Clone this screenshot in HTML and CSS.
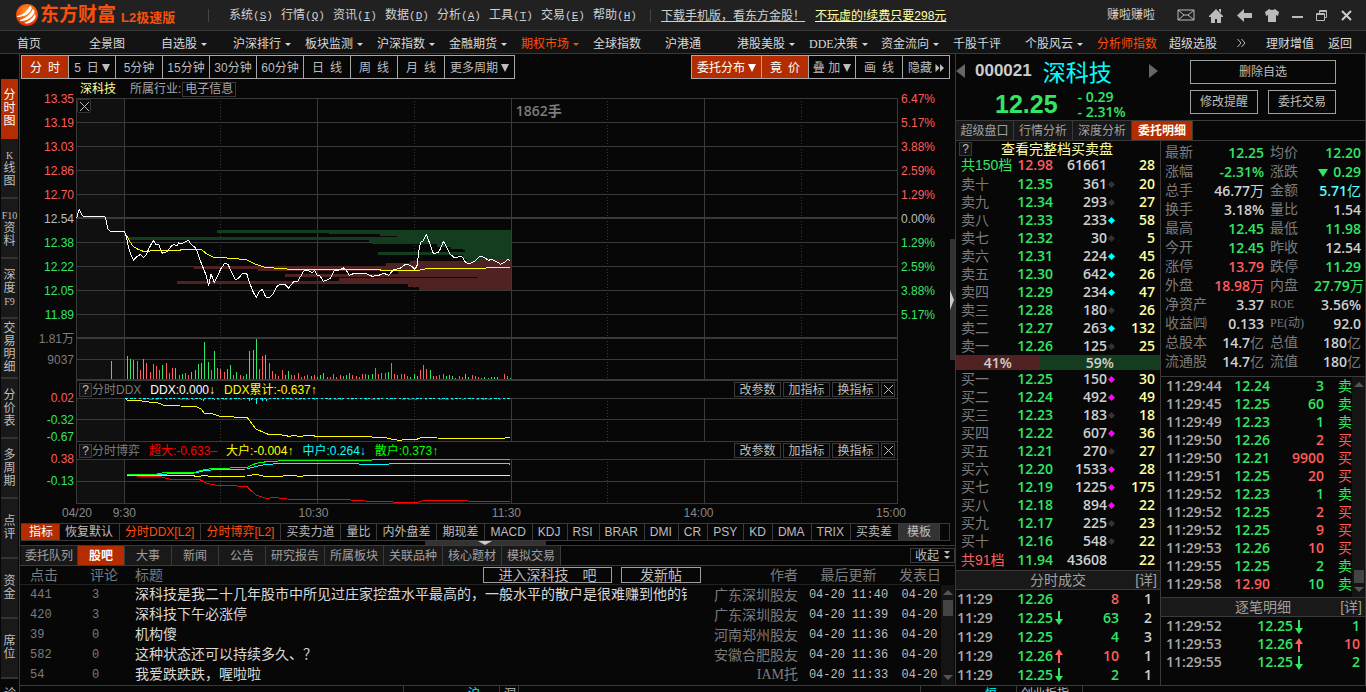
FILE: index.html
```html
<!DOCTYPE html>
<html lang="zh-CN">
<head>
<meta charset="utf-8">
<title>东方财富 L2极速版</title>
<link rel="stylesheet" href="styles.css">
</head>
<body>
<svg class="defs" aria-hidden="true">
  <symbol id="down" viewBox="0 0 8 14"><path d="M3 0h2v8h3L4 14 0 8h3z" fill="currentColor"/></symbol>
  <symbol id="up" viewBox="0 0 8 14"><path d="M3 14h2V6h3L4 0 0 6h3z" fill="currentColor"/></symbol>
  <symbol id="close" viewBox="0 0 9 9"><path d="M0 0l9 9M9 0L0 9" stroke="currentColor" fill="none"/></symbol>
</svg>

<header class="titlebar">
  <div class="brand">
    <svg class="logo" viewBox="0 0 22 22"><defs><radialGradient id="lg" cx=".5" cy=".35" r=".7"><stop offset="0" stop-color="#ffa030"/><stop offset=".6" stop-color="#f55a0a"/><stop offset="1" stop-color="#d81e00"/></radialGradient></defs><circle cx="11" cy="11" r="11" fill="url(#lg)"/><path d="M1 12C7 11 10 8 14 2c2 1 2 2 1 4C12 11 7 13 1 13zM4 16C10 14 14 11 17 5c2 2 2 4 0 6-4 5-8 6-13 6zM8 19c5-2 8-4 11-9 1 2 1 4-1 6-3 3-6 4-10 3z" fill="#fff"/></svg>
    <strong class="brand-name">东方财富</strong><strong class="brand-sub">L2极速版</strong>
  </div>
  <nav class="menu">
    <button>系统<span>(<u>S</u>)</span></button><button>行情<span>(<u>Q</u>)</span></button><button>资讯<span>(<u>I</u>)</span></button><button>数据<span>(<u>D</u>)</span></button><button>分析<span>(<u>A</u>)</span></button><button>工具<span>(<u>T</u>)</span></button><button>交易<span>(<u>E</u>)</span></button><button>帮助<span>(<u>H</u>)</span></button>
  </nav>
  <div class="promo"><a href="#">下载手机版，看东方金股！</a><a href="#" class="pale">不玩虚的!续费只要298元</a></div>
  <span class="user">赚啦赚啦</span>
  <div class="winicons">
    <button aria-label="邮件"><svg width="18" height="12" viewBox="0 0 18 12"><path d="M1 1h16v10H1zM1 1l6 5h4l6-5M1 11l6-5M17 11l-6-5" fill="none" stroke="#bbb"/></svg></button>
    <button aria-label="首页"><svg width="16" height="15" viewBox="0 0 16 15"><path d="M8 1l7 7v1h-2v6H9v-4H7v4H3V9H1V8zM11 1h2v4l-2-2z" fill="#bbb"/></svg></button>
    <button aria-label="后退"><svg width="15" height="13" viewBox="0 0 15 13"><path d="M0 6.500L7 0v4h8v5H7v4z" fill="#bbb"/></svg></button>
    <button aria-label="皮肤"><svg width="14" height="13" viewBox="0 0 14 13"><path d="M4 0q3 2 6 0l4 3-1 4-2-1v7H3V6L1 7 0 3z" fill="#bbb"/></svg></button>
    <button aria-label="最小化"><svg width="11" height="11" viewBox="0 0 11 11"><path d="M0 6h11v2H0z" fill="#bbb"/></svg></button>
    <button aria-label="还原"><svg width="12" height="11" viewBox="0 0 12 11"><path d="M.5 3.500h8v7h-8zM.5 4.500h8M3.500 3V.5h7v7H9M3 1.500h8" fill="none" stroke="#bbb"/></svg></button>
    <button aria-label="关闭"><svg width="11" height="11" viewBox="0 0 11 11"><path d="M1 1l9 9M10 1l-9 9" stroke="#ccc" stroke-width="2"/></svg></button>
  </div>
</header>

<nav class="mainnav">
  <a href="#">首页</a><a href="#">全景图</a><a href="#" class="dd">自选股</a><a href="#" class="dd">沪深排行</a><a href="#" class="dd">板块监测</a><a href="#" class="dd">沪深指数</a><a href="#" class="dd">金融期货</a><a href="#" class="dd hot">期权市场</a><a href="#">全球指数</a><a href="#">沪港通</a><a href="#" class="dd">港股美股</a><a href="#" class="dd"><span class="serif">DDE</span>决策</a><a href="#" class="dd">资金流向</a><a href="#">千股千评</a><a href="#" class="dd">个股风云</a><a href="#" class="hot">分析师指数</a><a href="#">超级选股</a>
  <button class="more" aria-label="更多"><svg width="9" height="8" viewBox="0 0 9 8"><path d="M.5 0l3.500 4-3.500 4M4.500 0L8 4 4.500 8" fill="none" stroke="#bbb"/></svg></button>
  <a href="#" class="short">理财增值</a><a href="#" class="short">返回</a>
</nav>

<div class="workspace">
  <aside class="sidebar">
    <button class="on">分<br>时<br>图</button><button><small>K</small><br>线<br>图</button><button><small>F10</small><br>资<br>料</button><button>深<br>度<br><small>F9</small></button><button>交<br>易<br>明<br>细</button><button>分<br>价<br>表</button><button>多<br>周<br>期</button><button>点<br>评</button><button>资<br>金</button><button>席<br>位</button>
  </aside>

  <main class="center">
    <div class="upper">
      <section class="chartcol">
        <div class="toolbar">
          <div class="btns"><button class="on">分&ensp;时</button><button>5&ensp;日<i class="tri"></i></button><button>5分钟</button><button>15分钟</button><button>30分钟</button><button>60分钟</button><button>日&ensp;线</button><button>周&ensp;线</button><button>月&ensp;线</button><button class="wide">更多周期<i class="tri"></i></button></div>
          <div class="btns"><button class="on wide">委托分布<i class="tri"></i></button><button class="on">竟&ensp;价</button><button>叠 加<i class="tri"></i></button><button>画&ensp;线</button><button>隐藏<svg class="ff" width="9" height="8" viewBox="0 0 9 8"><path d="M.5 0v8l4-4zM5 0v8l4-4z" fill="currentColor"/></svg></button></div>
        </div>

        <div class="chart">
          <div class="axis left">
            <span class="r">13.35</span><span class="r">13.19</span><span class="r">13.03</span><span class="r">12.86</span><span class="r">12.70</span><span>12.54</span><span class="g">12.38</span><span class="g">12.22</span><span class="g">12.05</span><span class="g">11.89</span><span class="dim">1.81万</span><span class="dim vol">9037</span>
            <span class="r sub first">0.02</span><span class="g sub">-0.32</span><span class="g last">-0.67</span><span class="r sub second">0.38</span><span class="g sub">-0.13</span>
          </div>
          <div class="plots">
            <div class="info"><span class="pale">深科技</span><span>所属行业:<a href="#">电子信息</a></span></div>
            <div class="price">
              <svg viewBox="0 0 2466 849" preserveAspectRatio="none" height="283">
                <path class="zone" d="M0 0H145V849H0z"/>
                <path class="grid" d="M0 1.500H2466M0 73.500H2466M0 145.500H2466M0 217.500H2466M0 289.500H2466M0 433.500H2466M0 505.500H2466M0 577.500H2466M0 649.500H2466M0 784.500H2466M1.500 0V849M145.500 0V849M724.500 0V849M1306.500 0V849M1885.500 0V849M2464.500 0V849"/>
                <path class="grid heavy" d="M0 361H2466M0 720H2466M0 846H2466"/>
                <path class="grid dots" d="M433.500 0V849M1015.500 0V849M1594.500 0V849M2176.500 0V849"/>
                <g transform="translate(672 306)">
                  <path class="bidzone" d="M-249 90H634V184H500V176H489V165H234V156H494V150H489V147H452V141H410V132H216V126H207V120H-520V111H291V108H240V102H88V99H-249z"/>
                  <path class="askzone" d="M634 178H540V184H330V189H258V198H-318V207H-126V213H294V222H-45V231H531V234H117V243H-369V252H324V261H357V270H634z"/>
                </g>
                <g transform="translate(-228 66)">
                  <path class="bar up" d="M412 777V724M421 777V750M439 777V729M451 777V756M460 777V732M469 777V738M478 777V750M499 777V729M508 777V759M517 777V744M538 777V765M556 777V759M565 777V765M634 777V750M652 777V744M661 777V747M673 777V756M700 777V765M721 777V765M730 777V768M778 777V747M787 777V708M808 777V729M817 777V753M826 777V762M835 777V768M847 777V750M874 777V765M883 777V765M895 777V759"/>
                  <path class="bar down" d="M334 777V723M382 777V708M391 777V717M400 777V720M430 777V717M487 777V735M526 777V744M547 777V763M574 777V756M586 777V750M595 777V733M604 777V729M613 777V666M625 777V726M643 777V693M682 777V747M691 777V735M709 777V756M739 777V762M748 777V693M760 777V690M769 777V657M796 777V705M856 777V765M865 777V753"/>
                  <polyline class="avg" points="374,336 380,348 388,362 400,380 414,388 430,394 446,394 456,391 540,391 545,388 604,388 618,400 640,411 682,414 740,419 766,432 795,442 860,447 900,448"/>
                  <polyline class="last" points="230,295 234,280 238,268 242,276 247,287 252,289 314,289 318,300 324,328 332,334 374,334 380,356 386,385 392,403 400,420 410,410 422,403 430,413 438,405 448,383 460,361 468,374 476,373 487,400 496,397 504,393 512,380 520,374 532,376 536,369 546,370 554,367 565,361 574,374 586,383 592,395 600,420 608,440 618,465 626,497 633,462 643,487 654,465 662,447 674,430 684,433 694,455 706,479 716,474 726,462 740,460 750,492 760,517 769,532 777,516 787,508 797,531 810,532 820,520 833,496 845,493 856,494 866,504 880,486 894,483 900,472"/>
                </g>
                <g transform="translate(672 306)">
                  <path class="bar up" d="M4 537V531M13 537V528M22 537V525M43 537V525M82 537V531M91 537V531M100 537V522M109 537V531M121 537V525M130 537V528M157 537V525M169 537V528M178 537V531M187 537V522M196 537V522M226 537V504M235 537V522M244 537V519M256 537V519M274 537V489M283 537V522M292 537V525M304 537V522M313 537V522M322 537V528M361 537V510M370 537V495M379 537V507M409 537V528M418 537V525M430 537V522M478 537V528M487 537V531M517 537V525M526 537V528M535 537V531M544 537V534M613 537V522M622 537V528"/>
                  <path class="bar down" d="M34 537V528M52 537V531M61 537V525M70 537V519M139 537V525M148 537V519M205 537V525M217 537V522M265 537V516M331 537V531M343 537V522M352 537V528M391 537V510M400 537V528M439 537V528M448 537V525M457 537V528M466 537V534M496 537V522M505 537V531M553 537V531M565 537V534M574 537V531M583 537V531M592 537V531M631 537V534"/>
                  <polyline class="avg" points="0,208 240,208 242,211 356,211 384,205 556,205 560,202 630,202"/>
                  <polyline class="last" points="0,232 12,212 22,211 36,218 44,212 52,226 60,228 70,244 90,236 102,212 114,212 130,204 138,210 148,226 160,221 195,220 217,229 236,226 252,220 266,226 280,210 300,205 318,192 334,198 345,208 352,195 356,155 362,126 370,122 379,104 388,127 400,160 414,158 422,145 430,124 440,142 450,162 462,172 486,170 496,186 506,192 526,182 538,170 550,171 565,181 576,178 590,185 602,193 614,187 624,178 630,182"/>
                </g>
              </svg>
              <button class="closebox" aria-label="关闭"><svg width="9" height="9"><use href="#close"/></svg></button>
              <span class="volhint">1862手</span>
            </div>
            <div class="panelhead">
              <button class="help">?</button><span class="name">分时DDX</span><span class="w">DDX:0.000↓</span><span class="y">DDX累计:-0.637↑</span>
              <div class="ops"><button>改参数</button><button>加指标</button><button>换指标</button><button class="x" aria-label="关闭"><svg width="9" height="9"><use href="#close"/></svg></button></div>
            </div>
            <svg viewBox="0 0 2466 132" preserveAspectRatio="none" height="44">
              <path class="zone" d="M0 0H145V132H0z"/>
              <path class="grid" d="M0 1.500H2466M0 64.500H2466M0 130.500H2466M1.500 0V132M145.500 0V132M724.500 0V132M1306.500 0V132M1885.500 0V132M2464.500 0V132"/>
              <path class="grid dots" d="M433.500 0V132M1015.500 0V132M1594.500 0V132M2176.500 0V132"/>
              <path class="line c ddx1" d="M150 1.500H1306"/><path class="line rd ddx2" d="M200 4.500H1306"/>
              <path class="line c" d="M376 3V7M383 3V10M415 3V7M519 3V10M526 3V7M540 3V18M558 3V10M570 3V8"/>
              <polyline class="avg" transform="translate(-228 -84)" points="374,84 382,90 425,93 455,97 475,99 492,106 540,108 588,109 605,118 612,129 635,131 660,139 742,143 768,177 790,187 805,193 840,194 868,199 880,197 900,199 930,196 950,199 1110,199 1120,202 1160,204 1180,209 1202,211 1215,208 1250,208 1262,203 1290,202 1310,204 1380,205 1515,205 1517,202 1530,202"/>
            </svg>
            <div class="panelhead">
              <button class="help">?</button><span class="name">分时博弈</span><span class="rd">超大:-0.633–</span><span class="y">大户:-0.004↑</span><span class="c">中户:0.264↓</span><span class="lg">散户:0.373↑</span>
              <div class="ops"><button>改参数</button><button>加指标</button><button>换指标</button><button class="x" aria-label="关闭"><svg width="9" height="9"><use href="#close"/></svg></button></div>
            </div>
            <svg viewBox="0 0 2466 135" preserveAspectRatio="none" height="45">
              <path class="zone" d="M0 0H145V135H0z"/>
              <path class="grid" d="M0 1.500H2466M0 67.500H2466M0 133.500H2466M1.500 0V135M145.500 0V135M724.500 0V135M1306.500 0V135M1885.500 0V135M2464.500 0V135"/>
              <path class="grid dots" d="M433.500 0V135M1015.500 0V135M1594.500 0V135M2176.500 0V135"/>
              <g transform="translate(-228 -267)">
                <polyline class="line rd" points="381,316 440,320 485,321 510,328 600,329 620,340 650,346 740,349 768,375 800,386 820,382 860,387 1040,389 1110,394 1180,396 1200,399 1250,398 1270,392 1530,394"/>
                <polyline class="line c" points="381,315 460,316 520,310 585,309 612,302 655,298 740,297 765,290 800,283 860,280 880,282 930,280 950,282 1000,281 1150,283 1200,280 1527,280 1530,284"/>
                <polyline class="line lg" points="381,314 460,314 492,308 585,307 612,299 640,295 740,293 768,280 800,275 870,271 1110,271 1120,269 1530,269"/>
                <polyline class="avg" points="381,316 440,317 580,317 590,320 610,317 640,319 740,318 768,313 790,318 850,318 870,316 900,319 930,316 1530,317"/>
              </g>
            </svg>
          </div>
          <div class="axis right">
            <span class="r">6.47%</span><span class="r">5.17%</span><span class="r">3.88%</span><span class="r">2.59%</span><span class="r">1.29%</span><span>0.00%</span><span class="g">1.29%</span><span class="g">2.59%</span><span class="g">3.88%</span><span class="g">5.17%</span>
          </div>
        </div>
        <div class="times"><span>04/20</span><span>9:30</span><span>10:30</span><span>11:30</span><span>14:00</span><span>15:00</span></div>
        <div class="indicators"><button class="on">指标</button><button>恢复默认</button><button class="hot">分时DDX[L2]</button><button class="hot">分时博弈[L2]</button><button>买卖力道</button><button>量比</button><button>内外盘差</button><button>期现差</button><button>MACD</button><button>KDJ</button><button>RSI</button><button>BRAR</button><button>DMI</button><button>CR</button><button>PSY</button><button>KD</button><button>DMA</button><button>TRIX</button><button>买卖差</button><button class="tpl">模板</button></div>
        <div class="hsplit"><i></i></div>
      </section>
      <div class="vsplit"><i></i></div>
    </div>

    <section class="news">
      <div class="newstabs"><button>委托队列</button><button class="on mid">股吧</button><button class="mid">大事</button><button class="mid">新闻</button><button class="mid">公告</button><button>研究报告</button><button>所属板块</button><button>关联品种</button><button>核心题材</button><button>模拟交易</button><button class="fold">收起<svg width="6" height="9" viewBox="0 0 6 9"><path d="M0 0h6L3 3zM0 5h6L3 8z" fill="currentColor"/></svg></button></div>
      <div class="newsbody">
        <table>
          <colgroup><col class="c1"><col class="c2"><col><col class="c4"><col class="c5"><col class="c6"></colgroup>
          <thead><tr><th>点击</th><th>评论</th><th><div class="th-title">标题<span><button class="go">进入深科技&emsp;吧</button><button>发新帖</button></span></div></th><th class="ra">作者</th><th class="ca">最后更新</th><th class="ca">发表日</th></tr></thead>
          <tbody>
            <tr><td class="m">441</td><td class="m">3</td><td><a href="#" class="t">深科技是我二十几年股市中所见过庄家控盘水平最高的，一般水平的散户是很难赚到他的钱</a></td><td class="ra">广东深圳股友</td><td class="d">04-20 11:40</td><td class="d">04-20</td></tr>
            <tr><td class="m">420</td><td class="m">3</td><td><a href="#" class="t">深科技下午必涨停</a></td><td class="ra">广东深圳股友</td><td class="d">04-20 11:39</td><td class="d">04-20</td></tr>
            <tr><td class="m">39</td><td class="m">0</td><td><a href="#" class="t">机构傻</a></td><td class="ra">河南郑州股友</td><td class="d">04-20 11:36</td><td class="d">04-20</td></tr>
            <tr><td class="m">582</td><td class="m">0</td><td><a href="#" class="t">这种状态还可以持续多久、？</a></td><td class="ra">安徽合肥股友</td><td class="d">04-20 11:36</td><td class="d">04-20</td></tr>
            <tr><td class="m">54</td><td class="m">0</td><td><a href="#" class="t">我爱跌跌跌，喔啦啦</a></td><td class="ra mix">IAM托</td><td class="d">04-20 11:33</td><td class="d">04-20</td></tr>
          </tbody>
        </table>
        <div class="scroll newsscroll"><i class="su"></i><i class="thumb"></i><i class="sd"></i></div>
      </div>
    </section>
  </main>

  <aside class="quote">
    <div class="qhead">
      <div class="qinfo">
        <div class="qname"><button class="prev" aria-label="上一只"></button><b>000021</b><strong>深科技</strong><button class="next" aria-label="下一只"></button></div>
        <div class="qprice"><b>12.25</b><span>- 0.29<br>- 2.31%</span></div>
      </div>
      <div class="qbtns"><button class="full">删除自选</button><button>修改提醒</button><button>委托交易</button></div>
    </div>
    <div class="qtabs"><button>超级盘口</button><button>行情分析</button><button>深度分析</button><button class="on">委托明细</button></div>
    <div class="qcols">
      <section class="book">
        <div class="booktitle"><button class="help">?</button><a href="#">查看完整档买卖盘</a></div>
        <table class="lv">
          <colgroup><col class="b1"><col class="b2"><col class="b3"><col class="b4"><col></colgroup>
          <tr><th class="g">共150档</th><td class="r">12.98</td><td>61661</td><td></td><td>28</td></tr>
          <tr><th>卖十</th><td>12.35</td><td>361</td><td><i></i></td><td>20</td></tr>
          <tr><th>卖九</th><td>12.34</td><td>293</td><td><i></i></td><td>27</td></tr>
          <tr><th>卖八</th><td>12.33</td><td>233</td><td><i class="cy"></i></td><td>58</td></tr>
          <tr><th>卖七</th><td>12.32</td><td>30</td><td><i></i></td><td>5</td></tr>
          <tr><th>卖六</th><td>12.31</td><td>224</td><td><i class="cy"></i></td><td>45</td></tr>
          <tr><th>卖五</th><td>12.30</td><td>642</td><td><i class="cy"></i></td><td>26</td></tr>
          <tr><th>卖四</th><td>12.29</td><td>234</td><td><i class="cy"></i></td><td>47</td></tr>
          <tr><th>卖三</th><td>12.28</td><td>180</td><td><i></i></td><td>26</td></tr>
          <tr><th>卖二</th><td>12.27</td><td>263</td><td><i class="cy"></i></td><td>132</td></tr>
          <tr><th>卖一</th><td>12.26</td><td>125</td><td><i></i></td><td>25</td></tr>
        </table>
        <div class="ratio"><span style="width:41%">41%</span><span style="width:59%">59%</span></div>
        <table class="lv buy">
          <colgroup><col class="b1"><col class="b2"><col class="b3"><col class="b4"><col></colgroup>
          <tr><th>买一</th><td>12.25</td><td>150</td><td><i class="mg"></i></td><td>30</td></tr>
          <tr><th>买二</th><td>12.24</td><td>492</td><td><i class="mg"></i></td><td>49</td></tr>
          <tr><th>买三</th><td>12.23</td><td>183</td><td><i></i></td><td>18</td></tr>
          <tr><th>买四</th><td>12.22</td><td>607</td><td><i class="mg"></i></td><td>36</td></tr>
          <tr><th>买五</th><td>12.21</td><td>270</td><td><i></i></td><td>27</td></tr>
          <tr><th>买六</th><td>12.20</td><td>1533</td><td><i class="mg"></i></td><td>28</td></tr>
          <tr><th>买七</th><td>12.19</td><td>1225</td><td><i class="mg"></i></td><td>175</td></tr>
          <tr><th>买八</th><td>12.18</td><td>894</td><td><i class="mg"></i></td><td>22</td></tr>
          <tr><th>买九</th><td>12.17</td><td>225</td><td><i></i></td><td>23</td></tr>
          <tr><th>买十</th><td>12.16</td><td>548</td><td><i></i></td><td>22</td></tr>
          <tr class="sum"><th class="r">共91档</th><td>11.94</td><td>43608</td><td></td><td>22</td></tr>
        </table>
        <div class="bar-title">分时成交<a href="#">[详]</a></div>
        <table class="deals">
          <colgroup><col class="d1"><col class="d2"><col class="d3"><col class="d4"><col></colgroup>
          <tr><td>11:29</td><td>12.26</td><td></td><td class="r">8</td><td>1</td></tr>
          <tr><td>11:29</td><td>12.25</td><td class="g"><svg><use href="#down"/></svg></td><td class="g">63</td><td>2</td></tr>
          <tr><td>11:29</td><td>12.25</td><td></td><td class="g">4</td><td>3</td></tr>
          <tr><td>11:29</td><td>12.26</td><td class="r"><svg><use href="#up"/></svg></td><td class="r">10</td><td>1</td></tr>
          <tr><td>11:29</td><td>12.25</td><td class="g"><svg><use href="#down"/></svg></td><td class="g">2</td><td>1</td></tr>
        </table>
      </section>

      <section class="detail">
        <table class="stats">
          <colgroup><col class="s1"><col class="s2"><col class="s3"><col></colgroup>
          <tr><th>最新</th><td class="g">12.25</td><th>均价</th><td class="g">12.20</td></tr>
          <tr><th>涨幅</th><td class="g">-2.31%</td><th>涨跌</th><td class="g"><i class="tri"></i>0.29</td></tr>
          <tr><th>总手</th><td>46.77<s>万</s></td><th>金额</th><td class="aq">5.71<s>亿</s></td></tr>
          <tr><th>换手</th><td>3.18%</td><th>量比</th><td>1.54</td></tr>
          <tr><th>最高</th><td class="g">12.45</td><th>最低</th><td class="g">11.98</td></tr>
          <tr><th>今开</th><td class="g">12.45</td><th>昨收</th><td>12.54</td></tr>
          <tr><th>涨停</th><td class="r">13.79</td><th>跌停</th><td class="g">11.29</td></tr>
          <tr><th>外盘</th><td class="r">18.98<s>万</s></td><th>内盘</th><td class="g">27.79<s>万</s></td></tr>
          <tr><th>净资产</th><td>3.37</td><th class="serif">ROE</th><td>3.56%</td></tr>
          <tr><th>收益㈣</th><td>0.133</td><th class="serif">PE(动)</th><td>92.0</td></tr>
          <tr><th>总股本</th><td>14.7<s class="dim">亿</s></td><th>总值</th><td>180<s class="dim">亿</s></td></tr>
          <tr><th>流通股</th><td>14.7<s class="dim">亿</s></td><th>流值</th><td>180<s class="dim">亿</s></td></tr>
        </table>
        <div class="tickwrap">
          <table class="ticks">
            <colgroup><col class="k1"><col class="k2"><col class="k3"><col></colgroup>
            <tr class="g"><td>11:29:44</td><td>12.24</td><td>3</td><td>卖</td></tr>
            <tr class="g"><td>11:29:45</td><td>12.25</td><td>60</td><td>卖</td></tr>
            <tr class="g"><td>11:29:49</td><td>12.23</td><td>1</td><td>卖</td></tr>
            <tr class="r"><td>11:29:50</td><td>12.26</td><td>2</td><td>买</td></tr>
            <tr class="r"><td>11:29:50</td><td>12.21</td><td>9900</td><td>买</td></tr>
            <tr class="r"><td>11:29:51</td><td>12.25</td><td>20</td><td>买</td></tr>
            <tr class="g"><td>11:29:52</td><td>12.23</td><td>1</td><td>卖</td></tr>
            <tr class="r"><td>11:29:52</td><td>12.25</td><td>2</td><td>买</td></tr>
            <tr class="r"><td>11:29:52</td><td>12.25</td><td>9</td><td>买</td></tr>
            <tr class="r"><td>11:29:53</td><td>12.26</td><td>10</td><td>买</td></tr>
            <tr class="g"><td>11:29:55</td><td>12.25</td><td>2</td><td>卖</td></tr>
            <tr class="g"><td>11:29:58</td><td class="hi">12.90</td><td>10</td><td>卖</td></tr>
          </table>
          <div class="scroll tickscroll"><i class="su"></i><i class="thumb"></i><i class="sd"></i></div>
        </div>
        <div class="bar-title">逐笔明细<a href="#">[详]</a></div>
        <table class="ticks each">
          <colgroup><col class="k1"><col class="e2"><col class="e3"><col></colgroup>
          <tr class="g"><td>11:29:52</td><td>12.25</td><td><svg><use href="#down"/></svg></td><td>1</td></tr>
          <tr class="r"><td>11:29:53</td><td>12.26</td><td><svg><use href="#up"/></svg></td><td>10</td></tr>
          <tr class="g"><td>11:29:55</td><td>12.25</td><td><svg><use href="#down"/></svg></td><td>2</td></tr>
        </table>
      </section>
    </div>
  </aside>
</div>

<footer class="status"><span class="f0">诊</span><span class="f1"></span><span class="f2">沪</span><span class="f3">洞</span><span class="f4"></span><span class="f5">恒</span><span class="f6">创业板指</span></footer>
</body>
</html>
```
FILE: styles.css
```css
:root {
  --bg: #070707;
  --line: #3a3a3a;
  --text: #bdbdbd;
  --dim: #7c7c7c;
  --red: #ff5c5c;
  --green: #32e664;
  --pale: #ffffa0;
  --accent: #b32d00;
  --hot: #ff4e0a;
  --num: "Open Sans", "Noto Sans", "Noto Sans CJK SC", sans-serif;
  --mono: "Liberation Mono", "Noto Sans CJK SC", monospace;
}

* { box-sizing: border-box; }

body {
  margin: 0;
  height: 100vh;
  overflow: hidden;
  display: flex;
  flex-direction: column;
  background: var(--bg);
  color: var(--text);
  font: 12px/16px "Liberation Sans", "Noto Sans CJK SC", sans-serif;
}

.defs { position: absolute; width: 0; height: 0; }

button {
  margin: 0;
  padding: 0;
  border: 0;
  background: none;
  color: inherit;
  font: inherit;
  white-space: nowrap;
}

a { color: inherit; text-decoration: none; }
i, em, s { font-style: normal; text-decoration: none; }
svg { display: block; }

.r { color: var(--red); }
.g { color: var(--green); }
.w { color: #fff; }
.y { color: #ff0; }
.c { color: #0ff; }
.rd { color: #f00; }
.lg { color: #0f0; }
.dim { color: var(--dim); }
.pale { color: var(--pale); }
.serif { font-family: "Liberation Serif", "Noto Sans CJK SC", serif; }

.tri {
  display: inline-block;
  margin-left: 3px;
  border: 4px solid transparent;
  border-top: 8px solid currentColor;
  border-bottom: 0;
}

/* title bar */
.titlebar {
  flex: none;
  display: flex;
  align-items: center;
  height: 31px;
  background: #212121;
  border-bottom: 1px solid var(--line);
  color: #d0d0d0;
}
.brand { display: flex; align-items: center; width: 209px; padding-left: 16px; color: #f8500c; }
.brand::after, .menu::after { content: ""; width: 1px; height: 13px; margin-left: auto; background: #444; }
.logo { width: 22px; height: 22px; margin-right: 2px; }
.brand-name { font-size: 19px; line-height: 28px; }
.brand-sub { font-size: 13px; margin-left: 5px; padding-top: 5px; }
.menu { display: flex; align-items: center; width: 442px; padding: 1px 0 0 20px; }
.menu button { width: 52px; text-align: left; }
.menu span { font: 11px/16px "Liberation Mono", monospace; }
.promo { display: flex; gap: 10px; margin-left: 10px; padding-top: 1px; }
.promo a { text-decoration: underline; }
.user { margin-left: auto; }
.winicons { display: flex; align-items: center; gap: 13px; padding: 0 14px 0 22px; }

/* main navigation */
.mainnav {
  flex: none;
  display: flex;
  align-items: center;
  height: 23px;
  padding: 4px 0 0 17px;
  background: #131313;
  border-bottom: 1px solid var(--line);
  color: #d8d8d8;
}
.mainnav a { width: 72px; white-space: nowrap; }
.mainnav .dd::after {
  content: "";
  display: inline-block;
  margin: 0 0 2px 4px;
  border: 3px solid transparent;
  border-top-color: currentColor;
  border-bottom: 0;
}
.mainnav .hot { color: var(--hot); }
.mainnav .more { margin: 0 auto 2px -4px; }
.mainnav .short { width: auto; margin-right: 14px; }

.workspace { flex: 1; display: flex; min-height: 0; }

/* side tabs */
.sidebar {
  flex: none;
  width: 20px;
  padding: 25px 1px 0;
  border-right: 1px solid var(--line);
  background: var(--bg);
}
.sidebar button {
  display: block;
  width: 17px;
  height: 60px;
  background: #191919;
  border-bottom: 2px solid #333;
  line-height: 13px;
}
.sidebar .on { background: var(--accent); color: #fff; border-color: var(--accent); }
.sidebar small { font: 10px/13px "Liberation Serif", serif; }

/* center */
.center { flex: 1; min-width: 0; display: flex; flex-direction: column; border-right: 1px solid var(--line); }
.upper { display: flex; }
.chartcol { flex: 1; min-width: 0; }
.toolbar { display: flex; justify-content: space-between; padding: 1px 0 0 1px; }
.btns { display: flex; border: solid #a8a8a8; border-width: 1px 0 1px 1px; }
.btns button {
  display: flex;
  align-items: center;
  justify-content: center;
  width: 47px;
  height: 22px;
  padding-top: 1px;
  border-right: 1px solid #a8a8a8;
}
.btns .wide { width: 70px; }
.btns .on { background: var(--accent); color: #fff; }
.ff { margin-left: 3px; }

.chart { display: flex; }
.axis { flex: none; padding-top: 8px; }
.axis span { display: block; height: 24px; line-height: 24px; }
.axis.left { width: 56px; padding-right: 2px; text-align: right; }
.axis.right { width: 52px; padding-left: 3px; }
.axis .vol { height: 18px; line-height: 18px; }
.axis .sub { height: 22px; line-height: 22px; }
.axis .first { margin-top: 18px; }
.axis .last { height: 12px; line-height: 12px; }
.axis .second { margin-top: 5px; }

.plots { flex: 1; min-width: 0; }
.plots > svg, .price > svg { width: 100%; shape-rendering: crispEdges; }
.plots path, .plots polyline { vector-effect: non-scaling-stroke; }
.info { display: flex; gap: 14px; height: 19px; padding: 2px 0 0 4px; color: #a8a8a8; }
.info a { display: inline-block; height: 15px; line-height: 13px; margin-left: 1px; padding: 0 2px; border: 1px solid var(--line); }
.info .pale { color: var(--pale); }
.zone { fill: #101010; }
.grid { stroke: var(--line); fill: none; }
.grid.heavy { stroke-width: 2; }
.grid.dots { stroke-dasharray: 1 2; }
.bidzone { fill: #143d1f; }
.askzone { fill: #512222; }
.bar { fill: none; }
.bar.up { stroke: var(--red); }
.bar.down { stroke: var(--green); }
.avg { fill: none; stroke: #ff0; }
polyline.last { fill: none; stroke: #fff; }
.line { fill: none; stroke: currentColor; }
.ddx1 { stroke-dasharray: 2 2 3 1 2 3; }
.ddx2 { stroke-dasharray: 3 3 4 2 3 8 2 12; }
.price { position: relative; }
.closebox {
  position: absolute;
  left: 1px;
  top: 1px;
  width: 14px;
  height: 14px;
  border: 1px solid #333;
  border-radius: 2px;
  background: #0a0a0a;
}
.closebox svg { margin: auto; }
.volhint { position: absolute; left: 53.5%; top: 5px; font: 600 14px/16px var(--num); color: var(--dim); }

.panelhead {
  display: flex;
  align-items: center;
  height: 17px;
  padding: 0 2px;
  border: solid var(--line);
  border-width: 0 1px;
}
.panelhead > span { margin-right: 9px; white-space: nowrap; }
.panelhead .name { color: var(--dim); }
.help { width: 13px; height: 14px; border: 1px solid var(--line); background: #151515; line-height: 12px; }
.ops { display: flex; gap: 2px; margin-left: auto; }
.ops button { width: 47px; height: 15px; line-height: 14px; border: 1px solid var(--line); }
.ops .x { width: 14px; }
.ops .x svg { margin: auto; }

.times {
  display: grid;
  grid-template-columns: 72px 44px repeat(4, 1fr);
  height: 19px;
  padding-right: 44px;
  line-height: 19px;
  text-align: right;
  color: #888;
}

.indicators { display: flex; height: 18px; margin-left: 1px; border: 1px solid var(--line); border-left: 0; }
.indicators button { padding: 0 6px 0 5px; border-right: 1px solid var(--line); line-height: 16px; }
.indicators .on { padding-left: 8px; background: var(--accent); color: #fff; }
.indicators .hot { color: var(--hot); }
.indicators .tpl { padding: 0 8px; background: #333; }

.hsplit { height: 4px; background: #000; }
.hsplit i { display: block; width: 121px; height: 4px; margin: 0 auto; background: #333; }
.hsplit i::after { content: ""; display: block; width: 0; margin: 0 auto; border: 7px solid transparent; border-width: 4px 7px 0; border-top-color: #ccc; }
.vsplit { flex: none; display: flex; align-items: center; width: 5px; }
.vsplit i { display: flex; align-items: center; width: 5px; height: 121px; background: #333; }
.vsplit i::after { content: ""; border: solid transparent; border-width: 10px 0 10px 4px; border-left-color: #ccc; }

/* forum list */
.news { border-top: 1px solid var(--line); border-bottom: 1px solid var(--line); }
.newstabs { display: flex; height: 20px; padding-left: 1px; border-bottom: 1px solid var(--line); }
.newstabs button { width: 59px; background: #191919; border-right: 1px solid var(--line); color: #a0a0a0; }
.newstabs button:first-child { width: 57px; }
.newstabs .mid { width: 47px; }
.newstabs .on { background: var(--accent); color: #fff; font-weight: bold; }
.newstabs .fold {
  display: flex;
  align-items: center;
  justify-content: center;
  gap: 5px;
  width: 45px;
  height: 15px;
  margin: 2px 0 0 auto;
  background: var(--bg);
  border: 1px solid var(--line);
  color: var(--text);
}
.newsbody { display: flex; }
table { border-collapse: separate; border-spacing: 0; table-layout: fixed; width: 100%; }
th, td { padding: 0; white-space: nowrap; text-align: left; font-weight: normal; }
.newsbody table { flex: 1; min-width: 0; width: 0; font-size: 14px; }
.newsbody th, .newsbody td { height: 20px; line-height: 20px; color: var(--dim); }
.newsbody th { height: 19px; line-height: 18px; border-bottom: 1px solid #222; }
.c1 { width: 70px; }
.c2 { width: 45px; }
.c4 { width: 97px; }
.c5 { width: 101px; }
.c6 { width: 41px; }
.newsbody th:first-child, .newsbody td:first-child { padding-left: 10px; }
.newsbody td:nth-child(2) { padding-left: 2px; }
.th-title, .th-title span { display: flex; justify-content: space-between; gap: 9px; align-items: center; }
.th-title button { width: 80px; height: 16px; line-height: 14px; border: 1px solid #a0a0a0; color: var(--text); }
.th-title .go { width: 129px; }
.newsbody .m, .newsbody .d { font: 12px/20px var(--mono); }
.newsbody .mix { font-family: "Liberation Serif", "Noto Sans CJK SC", serif; }
.newsbody .t { display: block; height: 20px; line-height: 19px; margin-right: 14px; color: #d8d8d8; overflow: hidden; }
.newsbody .d { color: var(--text); text-align: center; }
.newsbody .ra { text-align: right; }
.newsbody .ca { text-align: center; }

.scroll { flex: none; width: 13px; display: flex; flex-direction: column; align-items: center; background: #141414; }
.scroll .su, .scroll .sd { border: 5px solid transparent; }
.scroll .su { border-top: 0; border-bottom-color: #555; margin-top: 5px; }
.scroll .sd { border-bottom: 0; border-top-color: #555; margin: auto 0 5px; }
.scroll .thumb { width: 10px; height: 16px; margin-top: 5px; background: #444; }
.newsscroll { margin: 19px 1px 0 1px; }
.tickscroll .thumb { height: 13px; margin-top: auto; }
.tickscroll .sd { margin-top: 4px; }

/* quote panel */
.quote { flex: none; width: 410px; display: flex; flex-direction: column; border-right: 1px solid var(--line); border-bottom: 1px solid var(--line); }
.qhead { display: flex; height: 66px; }
.qinfo { flex: 1; }
.qname { display: flex; align-items: center; height: 34px; }
.qname b { margin-left: 10px; font-size: 17px; color: #ccc; }
.qname strong { margin-left: 11px; font: 23px/34px "Noto Sans CJK SC", sans-serif; color: #0ff; }
.prev, .next { border: solid transparent; border-width: 7px 0; }
.prev { border-right: 9px solid #666; }
.next { border-left: 9px solid #666; margin-left: auto; }
.qprice { display: flex; align-items: center; gap: 20px; height: 32px; padding-left: 39px; color: var(--green); }
.qprice b { font-size: 25px; }
.qprice span { font: 600 14px/15px var(--num); }
.qbtns { flex: none; display: grid; grid-template-columns: 68px 68px; grid-auto-rows: 24px; gap: 6px 10px; padding: 6px 29px 0 32px; }
.qbtns button { border: 1px solid #a0a0a0; }
.qbtns .full { grid-column: span 2; }
.qtabs { display: flex; height: 21px; border: solid var(--line); border-width: 1px 0; }
.qtabs button { width: 59px; background: #191919; border-right: 1px solid var(--line); color: #a0a0a0; }
.qtabs button:first-child { width: 58px; }
.qtabs .on { width: 61px; background: var(--accent); color: #fff; font-weight: bold; }
.qcols { flex: 1; display: flex; }
.book, .detail { flex: 1; min-width: 0; }
.book { border-right: 1px solid var(--line); }
.booktitle { display: flex; align-items: center; height: 15px; padding-left: 3px; font-size: 14px; color: var(--pale); }
.booktitle a { margin-left: 29px; }
.booktitle .help { font-size: 12px; color: var(--text); }

.lv td, .deals td, .stats td, .ticks td { font: 600 14px/18px var(--num); color: #d0d0d0; text-align: right; height: 18px; }
.lv th, .stats th { font-size: 14px; line-height: 18px; color: var(--dim); }
.lv th { padding-left: 5px; }
.lv th.g, .lv td:nth-child(2), .deals td:nth-child(2), .ticks td:nth-child(2) { color: var(--green); }
.lv th.r, .lv td.r { color: var(--red); }
.lv td:last-child { padding-right: 5px; color: var(--pale); }
.lv tr:first-child th, .lv tr:first-child td { height: 19px; vertical-align: top; }
.lv.buy tr:first-child th, .lv.buy tr:first-child td { height: 18px; }
.lv .sum td { height: 20px; line-height: 20px; }
.b1 { width: 55px; }
.b2 { width: 42px; }
.b3 { width: 54px; }
.b4 { width: 8px; }
.lv i { display: block; width: 5px; height: 5px; margin: 0 0 0 2px; background: #333; transform: rotate(45deg); }
.lv.buy tr:first-child i { margin-top: 7px; }
.lv .cy { background: #0ff; }
.lv .mg { background: #f0f; }
.ratio { display: flex; height: 15px; font: 600 14px/15px var(--num); color: #d0d0d0; text-align: center; }
.ratio span:first-child { background: #512222; }
.ratio span:last-child { background: #143d1f; }

.bar-title {
  display: flex;
  justify-content: center;
  position: relative;
  height: 20px;
  line-height: 18px;
  font-size: 14px;
  color: #a0a0a0;
  background: #191919;
  border: solid var(--line);
  border-width: 1px 0;
}
.bar-title a { position: absolute; right: 3px; }
.deals td { height: 19px; line-height: 18px; vertical-align: top; }
.deals td:first-child { text-align: left; padding-left: 1px; color: #a8a8a8; }
.deals td:last-child { padding-right: 8px; }
.d1 { width: 50px; }
.d2 { width: 47px; }
.d3 { width: 16px; }
.d4 { width: 50px; }
td svg { width: 8px; height: 14px; margin: 2px 0 0 2px; }
.deals td.r, .stats td.r { color: var(--red); }
.deals td.g, .stats td.g { color: var(--green); }

.stats { margin: 2px 0 5px; }
.stats td, .stats th { height: 19px; line-height: 19px; }
.stats s { font-weight: 400; }
.stats .aq { color: #5ff; }
.stats th:first-child { padding-left: 4px; }
.stats th:nth-child(3) { padding-left: 6px; }
.stats td:last-child { padding-right: 4px; }
.stats .tri { margin-right: 5px; border-width: 8px 5px 0; }
.stats .serif { font-size: 12px; }
.s1 { width: 50px; }
.s2 { width: 53px; }
.s3 { width: 50px; }

.tickwrap { display: flex; height: 221px; border-top: 1px solid var(--line); }
.tickwrap table { flex: 1; width: 0; height: 216px; }
.ticks td:first-child { text-align: left; padding-left: 5px; color: #a8a8a8; }
.ticks .g td:nth-child(n+3) { color: var(--green); }
.ticks .r td:nth-child(n+3) { color: var(--red); }
.ticks td.hi { color: var(--red); }
.ticks td:last-child { font-weight: 400; }
.each td:last-child { font-weight: 600; padding-right: 5px; }
.k1 { width: 67px; }
.k2 { width: 42px; }
.k3 { width: 54px; }
.e2 { width: 65px; }
.e3 { width: 14px; }

/* clipped ticker strip */
.status { flex: none; display: flex; height: 6px; overflow: hidden; line-height: 16px; }
.status span { padding-left: 4px; border-right: 1px solid var(--line); }
.f0 { width: 20px; }
.f1 { width: 384px; }
.status .f2 { width: 96px; padding-left: 64px; color: #0ff; }
.f3 { width: 19px; }
.f4 { width: 402px; }
.status .f5 { width: 96px; padding-left: 64px; color: #0ff; }
.f6 { width: 66px; }
```
